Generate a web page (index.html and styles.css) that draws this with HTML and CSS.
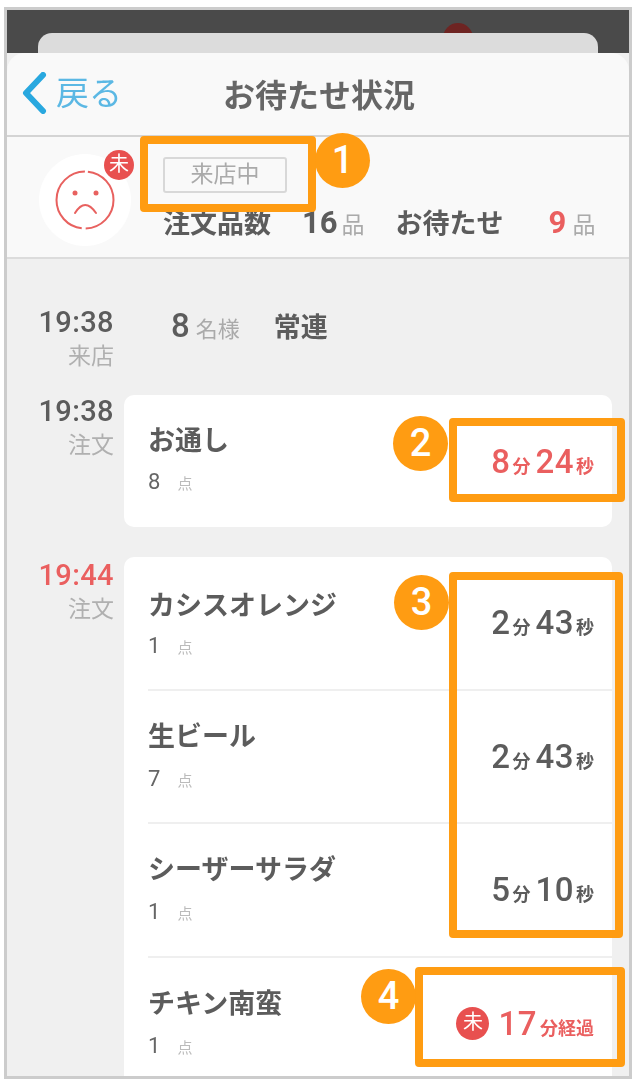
FILE: index.html
```html
<!DOCTYPE html>
<html lang="ja">
<head>
    <meta charset="UTF-8">
    <title>お待たせ状況</title>
    <link rel="stylesheet" href="styles.css">
</head>
<body>
    <div class="frame">
        <div class="backdrop">
            <div class="dot"></div>
            <div class="back-sheet"></div>
        </div>
        <div class="sheet">
            <div class="nav">
                <div class="back">
                    <svg class="chevron" width="26" height="42" viewBox="0 0 26 42">
                        <path d="M22 3 L5 21 L22 39" fill="none" stroke="#29a8df" stroke-width="6" stroke-linecap="round" stroke-linejoin="round"/>
                    </svg>
                    <span>戻る</span>
                </div>
                <h1>お待たせ状況</h1>
            </div>

            <div class="summary">
                <div class="avatar">
                    <svg width="92" height="92" viewBox="0 0 92 92">
                        <circle cx="46" cy="46" r="46" fill="#fff"/>
                        <circle cx="46" cy="46" r="28.5" fill="none" stroke="#e8615f" stroke-width="2" stroke-dasharray="44 4 86 3 45"/>
                        <circle cx="36" cy="39" r="2.5" fill="#e8615f"/>
                        <circle cx="57" cy="39" r="2.5" fill="#e8615f"/>
                        <path d="M36 59 Q46 43 57 59" fill="none" stroke="#e8615f" stroke-width="2" stroke-linecap="round"/>
                    </svg>
                    <span class="mark">未</span>
                </div>
                <div class="summary-info">
                    <span class="tag">来店中</span>
                    <div class="counts">
                        <b class="count-label">注文品数</b>
                        <span class="count"><b>16</b><small>品</small></span>
                        <b class="count-label wait">お待たせ</b>
                        <span class="count last"><b class="red">9</b><small>品</small></span>
                    </div>
                </div>
            </div>

            <div class="timeline">
                <div class="entry visit">
                    <div class="when"><b>19:38</b><span>来店</span></div>
                    <div class="guests"><b class="num">8</b><small>名様</small><b class="regular">常連</b></div>
                </div>

                <div class="entry first-order">
                    <div class="when"><b>19:38</b><span>注文</span></div>
                    <div class="card">
                        <div class="row short">
                            <div class="item"><b>お通し</b><span class="qty">8<small>点</small></span></div>
                            <div class="elapsed red"><b>8</b><small>分</small><b>24</b><small>秒</small></div>
                        </div>
                    </div>
                </div>

                <div class="entry second-order">
                    <div class="when"><b class="red">19:44</b><span>注文</span></div>
                    <div class="card">
                        <div class="row top-row">
                            <div class="item"><b>カシスオレンジ</b><span class="qty">1<small>点</small></span></div>
                            <div class="elapsed"><b>2</b><small>分</small><b>43</b><small>秒</small></div>
                        </div>
                        <div class="row">
                            <div class="item"><b>生ビール</b><span class="qty">7<small>点</small></span></div>
                            <div class="elapsed"><b>2</b><small>分</small><b>43</b><small>秒</small></div>
                        </div>
                        <div class="row">
                            <div class="item"><b>シーザーサラダ</b><span class="qty">1<small>点</small></span></div>
                            <div class="elapsed"><b>5</b><small>分</small><b>10</b><small>秒</small></div>
                        </div>
                        <div class="row">
                            <div class="item"><b>チキン南蛮</b><span class="qty">1<small>点</small></span></div>
                            <div class="elapsed red"><span class="mark-small">未</span><b>17</b><small>分経過</small></div>
                        </div>
                    </div>
                </div>
            </div>
        </div>

        <div class="callout box-1"></div>
        <div class="callout box-2"></div>
        <div class="callout box-3"></div>
        <div class="callout box-4"></div>
        <div class="pin pin-1">1</div>
        <div class="pin pin-2">2</div>
        <div class="pin pin-3">3</div>
        <div class="pin pin-4">4</div>
    </div>
</body>
</html>
```

FILE: styles.css
```css
* {
    margin: 0;
    padding: 0;
    box-sizing: border-box;
}

body {
    font-family: Roboto, "Noto Sans CJK JP", sans-serif;
    background-color: #fff;
    color: #5c5c5c;
}

.frame {
    position: relative;
    width: 628px;
    height: 1072px;
    margin: 7px 4px 0;
    border: 3px solid #ccc;
    background: #f0f0f0;
    overflow: hidden;
}

.backdrop {
    position: relative;
    height: 43px;
    background: #4a4a4a;
    padding: 23px 31px 0;
}

.dot {
    position: absolute;
    left: 436px;
    top: 13px;
    width: 30px;
    height: 30px;
    border-radius: 50%;
    background: #6e2422;
}

.back-sheet {
    position: relative;
    height: 20px;
    background: #dcdcdc;
    border-radius: 14px 14px 0 0;
}

.sheet {
    background: #f0f0f0;
    border-radius: 18px 18px 0 0;
    filter: blur(0.5px);
}

.nav {
    position: relative;
    height: 84px;
    background: #f9f9f9;
    border-radius: 18px 18px 0 0;
    border-bottom: 2px solid #d4d4d4;
    display: flex;
    align-items: center;
    justify-content: center;
}

.nav h1 {
    font-size: 32px;
    font-weight: 700;
    color: #666;
    margin: 0 0 2px 2px;
}

.back {
    position: absolute;
    left: 14px;
    top: 18px;
    display: flex;
    align-items: center;
    gap: 9px;
    color: #5bb8e4;
    font-size: 33px;
}

.back span {
    margin-top: -4px;
}

.summary {
    height: 122px;
    background: #f9f9f9;
    border-bottom: 2px solid #dcdcdc;
    display: flex;
    padding: 17px 0 0 32px;
}

.avatar {
    position: relative;
    width: 92px;
    height: 92px;
}

.mark {
    position: absolute;
    left: 65px;
    top: -4px;
    width: 30px;
    height: 30px;
    border-radius: 50%;
    background: #e8504f;
    color: #fff;
    font-size: 20px;
    line-height: 28px;
    text-align: center;
}

.summary-info {
    margin-left: 32px;
    padding-top: 3px;
}

.tag {
    display: block;
    width: 124px;
    height: 36px;
    border: 2px solid #d8d8d8;
    border-radius: 3px;
    color: #aaa;
    font-size: 23px;
    line-height: 31px;
    text-align: center;
}

.counts {
    display: flex;
    align-items: baseline;
    margin-top: 9px;
    height: 40px;
}

.count-label {
    font-size: 27px;
}

.count {
    margin-left: 31px;
    font-size: 31px;
}

.count b {
    font-weight: 700;
}

.count small {
    font-size: 23px;
    color: #aaa;
    margin-left: 4px;
}

.count-label.wait {
    margin-left: 31px;
}

.count.last {
    margin-left: 45px;
}

.count.last small {
    margin-left: 6px;
}

.red {
    color: #ea5f5f;
}

.entry {
    display: flex;
}

.when {
    width: 107px;
    text-align: right;
    display: flex;
    flex-direction: column;
    flex-shrink: 0;
}

.when b {
    font-size: 29px;
    font-weight: 500;
    letter-spacing: 0.4px;
    line-height: 32px;
}

.when span {
    font-size: 23px;
    line-height: 32px;
    margin-top: 3px;
    color: #b0b0b0;
}

.second-order .when {
    padding-top: 2px;
}

.visit {
    padding-top: 47px;
    height: 136px;
}

.guests {
    margin-left: 57px;
    display: flex;
    align-items: baseline;
}

.guests .num {
    font-size: 33px;
    font-weight: 500;
}

.guests small {
    font-size: 22px;
    color: #aaa;
    margin-left: 6px;
}

.guests .regular {
    font-size: 27px;
    margin-left: 34px;
}

.first-order {
    height: 162px;
}

.card {
    margin-left: 10px;
    width: 488px;
    background: #fff;
    border-radius: 10px;
    height: 132px;
    padding-left: 24px;
}

.second-order .card {
    height: 530px;
}

.row {
    height: 133.5px;
    display: flex;
    justify-content: space-between;
    align-items: flex-start;
    border-bottom: 2px solid #efefef;
    padding: 26px 18px 0 0;
}

.row:last-child {
    border-bottom: none;
}

.row.short {
    height: 132px;
    border-bottom: none;
}

.row.top-row {
    padding-top: 29px;
}

.item b {
    display: block;
    font-size: 27px;
    line-height: 40px;
}

.qty {
    display: block;
    font-size: 22px;
    line-height: 40px;
    color: #666;
    margin-top: 2px;
}

.top-row .qty {
    margin-top: 0;
}

.short .qty {
    margin-top: 1px;
}

.qty small {
    font-size: 15px;
    color: #bbb;
    margin-left: 17px;
}

.elapsed {
    display: flex;
    align-items: baseline;
    margin-top: 20px;
}

.top-row .elapsed {
    margin-top: 17px;
}

.short .elapsed {
    margin-top: 21px;
}

.elapsed b {
    font-size: 33px;
    font-weight: 500;
    letter-spacing: 0.5px;
    line-height: 40px;
}

.elapsed small {
    font-size: 18px;
    font-weight: 700;
    margin: 0 5px 0 2px;
}

.elapsed small:last-child {
    margin-right: 0;
}

.elapsed .mark-small + b + small {
    margin-left: 3px;
}

.mark-small {
    align-self: center;
    width: 33px;
    height: 33px;
    border-radius: 50%;
    background: #e8504f;
    color: #fff;
    font-size: 20px;
    line-height: 31px;
    text-align: center;
    margin-right: 9px;
}

.callout {
    position: absolute;
    border: 8px solid #ff9c12;
    border-radius: 4px;
}

.box-1 {
    left: 133px;
    top: 126px;
    width: 176px;
    height: 76px;
}

.box-2 {
    left: 442px;
    top: 408px;
    width: 176px;
    height: 84px;
}

.box-3 {
    left: 442px;
    top: 562px;
    width: 174px;
    height: 366px;
}

.box-4 {
    left: 408px;
    top: 957px;
    width: 210px;
    height: 100px;
}

.pin {
    position: absolute;
    width: 55px;
    height: 55px;
    border-radius: 50%;
    background: #ff9c12;
    color: #fff;
    font-size: 38px;
    font-weight: 500;
    line-height: 55px;
    text-align: center;
}

.pin-1 {
    left: 308px;
    top: 123px;
}

.pin-2 {
    left: 386px;
    top: 406px;
}

.pin-3 {
    left: 387px;
    top: 565px;
}

.pin-4 {
    left: 354px;
    top: 959px;
}
```
